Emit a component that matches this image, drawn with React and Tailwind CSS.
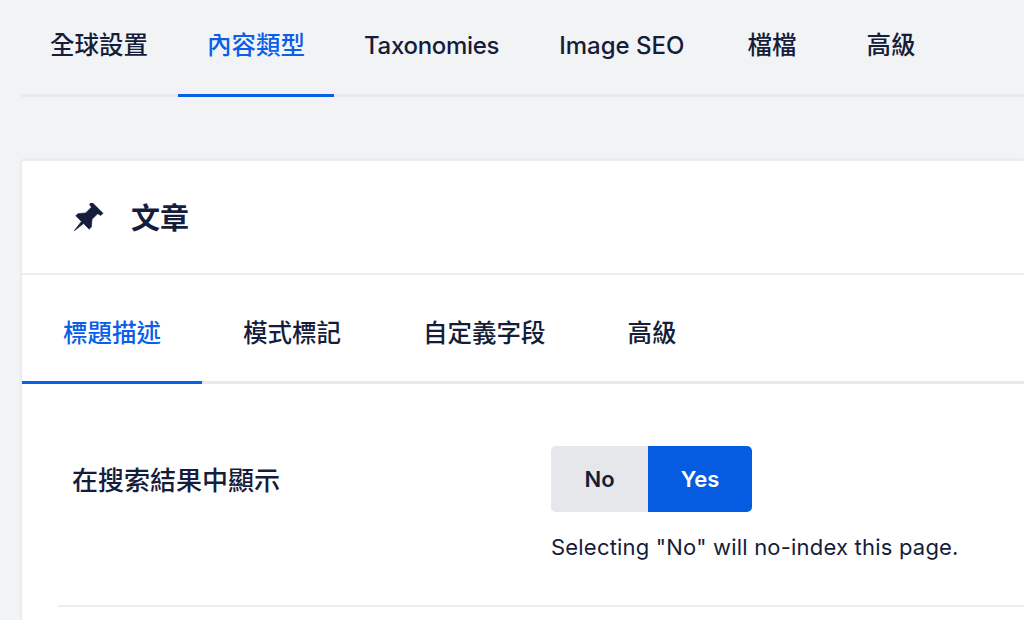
const font = "font-['Inter','Noto_Sans_CJK_TC',sans-serif]";

const mainTabs = [
  { label: "全球設置", className: "pl-[29px] pr-[30px] text-[24.5px]" },
  { label: "內容類型", className: "px-[29px] text-[24.5px]" },
  { label: "Taxonomies", className: "px-[30px] text-[24px] tracking-[-0.3px]" },
  { label: "Image SEO", className: "pl-[30px] pr-[30px] text-[24px]" },
  { label: "檔檔", className: "pl-[33px] pr-[35px] text-[24.5px]" },
  { label: "高級", className: "pl-[35px] pr-[29px] text-[24.5px]" },
];
const subTabs = ["標題描述", "模式標記", "自定義字段", "高級"];

function PinIcon() {
  return (
    <svg viewBox="0 0 31 28" className="h-[28px] w-[31px] -translate-y-[2px] translate-x-px" fill="currentColor" stroke="currentColor" strokeWidth="0.6" strokeLinejoin="round">
      <path
        transform="translate(0 28) rotate(45) translate(0 -33)"
        d="M-8 0 L8 0 L8 3 L4.5 4 L4.5 12 L9.5 18 L9.5 21 L1.5 21 L0 33 L-1.5 21 L-9.5 21 L-9.5 18 L-4.5 12 L-4.5 4 L-8 3 Z"
      />
    </svg>
  );
}

function App() {
  return (
    <div className={`${font} h-[620px] w-[1024px] overflow-hidden bg-[#f2f3f5] pl-[21px] text-[#151d3b]`}>
      <div className="flex h-[97px] border-b-[3px] border-[#e8e9eb]">
        {mainTabs.map((tab, index) => (
          <div
            key={tab.label}
            className={`-mb-[3px] flex h-[97px] items-center border-b-[3px] pb-[3px] font-medium ${tab.className} ${
              index === 1 ? "border-[#0b5fe6] text-[#0b5fe6]" : "border-transparent"
            }`}
          >
            {tab.label}
          </div>
        ))}
      </div>

      <div className="mt-[63px] ml-px h-[600px] border-t border-[#ebecee] bg-white shadow-[0_0_3px_rgba(0,0,0,0.1)]">
        <div className="flex h-[114px] items-center gap-[27px] border-b-2 border-[#eceded] pl-[51px] pt-[3px]">
          <PinIcon />
          <h2 className="text-[29px] font-semibold">文章</h2>
        </div>

        <div className="flex h-[109px] border-b-[3px] border-[#e8e9eb]">
          {subTabs.map((tab, index) => (
            <div
              key={tab}
              className={`-mb-[3px] flex h-[109px] items-center border-b-[3px] px-[41px] pt-[11px] text-[24.5px] font-medium ${
                index === 0 ? "border-[#0b5fe6] text-[#0b5fe6]" : "border-transparent"
              }`}
            >
              {tab}
            </div>
          ))}
        </div>

        <div className="ml-[36px] mt-[62px] flex h-[161px] border-b-2 border-[#eceded]">
          <div className="w-[493px] pl-[14px] pt-[17px] text-[26px] leading-[36px] font-medium">在搜索結果中顯示</div>
          <div>
            <div className="flex h-[66px] w-[201px] overflow-hidden rounded-[5px] text-[22px] font-semibold">
              <div className="flex w-[97px] items-center justify-center bg-[#e6e7ea]">No</div>
              <div className="flex w-[104px] items-center justify-center bg-[#055ce0] text-white">Yes</div>
            </div>
            <p className="mt-[17px] text-[22px] leading-[36px] tracking-[0.2px]">Selecting "No" will no-index this page.</p>
          </div>
        </div>
      </div>
    </div>
  );
}

export default App;
